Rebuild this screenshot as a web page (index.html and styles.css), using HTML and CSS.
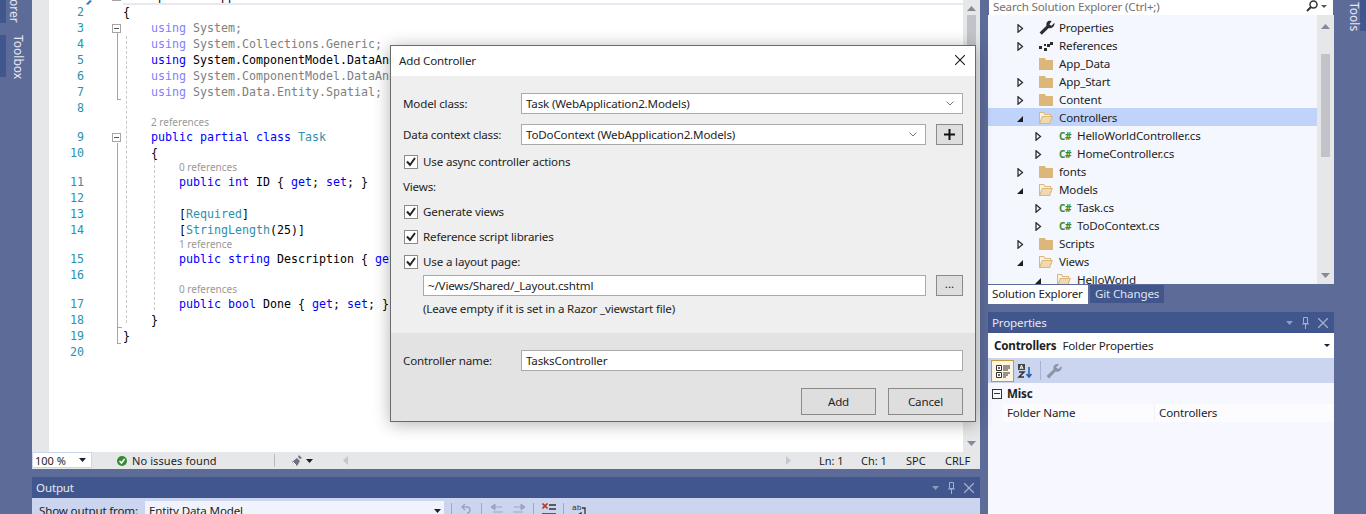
FILE: index.html
```html
<!DOCTYPE html>
<html lang="en">
<head>
<meta charset="utf-8">
<title>Add Controller</title>
<link rel="stylesheet" href="styles.css">
</head>
<body>
<div class="shell">
  <aside class="rail rail-left">
    <div class="rail-tab rail-tab-a"><span class="vtext">lorer</span></div>
    <div class="rail-tab rail-tab-b"><span class="vtext">Toolbox</span></div>
  </aside>

  <main class="center">
    <section class="editor">
      <div class="selmargin"></div>
      <div class="code">
        <div class="row first"><span class="ln"></span><span class="fold"><i class="fbox"></i></span><span class="src">namespace WebApplication2.Models</span></div>
        <div class="row"><span class="ln">2</span><span class="fold"></span><span class="src">{</span></div>
        <div class="row"><span class="ln">3</span><span class="fold"><i class="fbox"></i></span><span class="src">    <b class="kf">using</b> <b class="nf">System;</b></span></div>
        <div class="row"><span class="ln">4</span><span class="fold"></span><span class="src">    <b class="kf">using</b> <b class="nf">System.Collections.Generic;</b></span></div>
        <div class="row"><span class="ln">5</span><span class="fold"></span><span class="src">    <b class="k">using</b> System.ComponentModel.DataAnnotations;</span></div>
        <div class="row"><span class="ln">6</span><span class="fold"></span><span class="src">    <b class="kf">using</b> <b class="nf">System.ComponentModel.DataAnnotations.Schema;</b></span></div>
        <div class="row"><span class="ln">7</span><span class="fold"></span><span class="src">    <b class="kf">using</b> <b class="nf">System.Data.Entity.Spatial;</b></span></div>
        <div class="row"><span class="ln">8</span><span class="fold"></span><span class="src"></span></div>
        <div class="lens l1">2 references</div>
        <div class="row"><span class="ln">9</span><span class="fold"><i class="fbox"></i></span><span class="src">    <b class="k">public partial class</b> <b class="t">Task</b></span></div>
        <div class="row"><span class="ln">10</span><span class="fold"></span><span class="src">    {</span></div>
        <div class="lens l2">0 references</div>
        <div class="row"><span class="ln">11</span><span class="fold"></span><span class="src">        <b class="k">public int</b> ID { <b class="k">get</b>; <b class="k">set</b>; }</span></div>
        <div class="row"><span class="ln">12</span><span class="fold"></span><span class="src"></span></div>
        <div class="row"><span class="ln">13</span><span class="fold"></span><span class="src">        [<b class="t">Required</b>]</span></div>
        <div class="row"><span class="ln">14</span><span class="fold"></span><span class="src">        [<b class="t">StringLength</b>(25)]</span></div>
        <div class="lens l2">1 reference</div>
        <div class="row"><span class="ln">15</span><span class="fold"></span><span class="src">        <b class="k">public string</b> Description { <b class="k">get</b>; <b class="k">set</b>; }</span></div>
        <div class="row"><span class="ln">16</span><span class="fold"></span><span class="src"></span></div>
        <div class="lens l2">0 references</div>
        <div class="row"><span class="ln">17</span><span class="fold"></span><span class="src">        <b class="k">public bool</b> Done { <b class="k">get</b>; <b class="k">set</b>; }</span></div>
        <div class="row"><span class="ln">18</span><span class="fold"></span><span class="src">    }</span></div>
        <div class="row"><span class="ln">19</span><span class="fold"></span><span class="src">}</span></div>
        <div class="row"><span class="ln">20</span><span class="fold"></span><span class="src"></span></div>
        <i class="curline"></i>
        <i class="guide g1"></i><i class="guide g2"></i>
        <i class="fline f1"></i><i class="fline f2"></i>
        <svg class="pencil" width="8" height="5" viewBox="0 0 8 5"><path d="M0 4l4-4 2 1-4 4z" fill="#3a7bc8"/></svg>
      </div>
      <div class="vscroll">
        <svg width="9" height="5" viewBox="0 0 9 5"><path d="M0 5h9L4.500 0z" fill="#868999"/></svg>
        <i class="thumb"></i>
        <svg width="9" height="5" viewBox="0 0 9 5"><path d="M0 0h9L4.500 5z" fill="#868999"/></svg>
      </div>
    </section>

    <footer class="status">
      <div class="zoombox"><span>100 %</span><svg width="7" height="4" viewBox="0 0 7 4"><path d="M0 0h7L3.500 4z" fill="#1e1e3c"/></svg></div>
      <div class="issues">
        <svg width="14" height="14" viewBox="0 0 14 14"><circle cx="7" cy="7" r="5" fill="#388a34"/><path d="M4.500 7l2 2 3-4" fill="none" stroke="#fff" stroke-width="1.500"/></svg>
        <span>No issues found</span>
      </div>
      <i class="sep"></i>
      <svg class="brush" width="13" height="14" viewBox="0 0 13 14"><path d="M9 1l3 3-2 1-2-2zM7 4l3 3-3 5-5-4z" fill="#6f7180"/><path d="M3 8l3 3" stroke="#fff"/></svg>
      <svg class="caret" width="7" height="4" viewBox="0 0 7 4"><path d="M0 0h7L3.500 4z" fill="#1e1e1e"/></svg>
      <svg class="harrow" width="5" height="9" viewBox="0 0 5 9"><path d="M5 0v9L0 4.500z" fill="#c6c6ce"/></svg>
      <span class="grow"></span>
      <svg class="harrow-r" width="5" height="9" viewBox="0 0 5 9"><path d="M0 0v9l5-4.500z" fill="#c6c6ce"/></svg>
      <span class="pos p1">Ln: 1</span><span class="pos p2">Ch: 1</span><span class="pos p3">SPC</span><span class="pos p4">CRLF</span>
    </footer>

    <section class="output">
      <header class="panelhead">
        <span>Output</span>
        <span class="panelicons">
          <svg width="7" height="4" viewBox="0 0 7 4"><path d="M0 0h7L3.500 4z" fill="#8e9ac0"/></svg>
          <svg width="7" height="12" viewBox="0 0 7 12"><path d="M1.500 .500h4v6h-4zM0 7h7M3.500 7v5" fill="none" stroke="#a5aecb"/></svg>
          <svg width="10" height="10" viewBox="0 0 10 10"><path d="M0 0l10 10M10 0L0 10" stroke="#a5aecb" stroke-width="1.300"/></svg>
        </span>
      </header>
      <div class="outbar">
        <span class="outlabel">Show output from:</span>
        <div class="outselect"><span>Entity Data Model</span><svg width="7" height="4" viewBox="0 0 7 4"><path d="M0 0h7L3.500 4z" fill="#1e1e3c"/></svg></div>
        <i class="osep"></i>
        <svg class="oic" width="14" height="14" viewBox="0 0 14 14"><path d="M5 1L2 4l3 3M2 4h5c2 0 3 1 3 3s-1 3-3 3M7 12h7" fill="none" stroke="#9aa3bf" stroke-width="1.300"/></svg>
        <i class="osep"></i>
        <svg class="oic" width="14" height="14" viewBox="0 0 14 14"><path d="M5 1L1 4l4 3zM4 4h8M3 9h10M3 12h10" fill="#9aa3bf" stroke="#9aa3bf"/></svg>
        <svg class="oic" width="14" height="14" viewBox="0 0 14 14"><path d="M9 1l4 3-4 3zM2 4h8M1 9h10M1 12h10" fill="#9aa3bf" stroke="#9aa3bf"/></svg>
        <i class="osep"></i>
        <svg class="oic" width="14" height="14" viewBox="0 0 14 14"><path d="M7 2h7M7 6h7M0 11h14" stroke="#333" stroke-width="1.500"/><path d="M.500 .500l5 5M5.500 .500l-5 5" stroke="#c0391b" stroke-width="1.700"/></svg>
        <i class="osep"></i>
        <svg class="oic" width="14" height="14" viewBox="0 0 14 14"><text x="0" y="7" font-family="Liberation Mono, monospace" font-size="8" fill="#333">ab</text><path d="M10 5h3v7H7M9 10l-3 2 3 2z" fill="none" stroke="#333" stroke-width="1.300"/></svg>
      </div>
    </section>
  </main>

  <aside class="side">
    <section class="solution">
      <div class="search"><span>Search Solution Explorer (Ctrl+;)</span>
        <svg width="14" height="13" viewBox="0 0 14 13"><circle cx="8.500" cy="4.500" r="3.500" fill="none" stroke="#333" stroke-width="1.500"/><path d="M6 7l-4 4" stroke="#333" stroke-width="2"/></svg>
        <svg width="6" height="3" viewBox="0 0 6 3"><path d="M0 0h6L3 3z" fill="#555"/></svg>
      </div>
      <div class="treewrap">
        <ul class="tree">
          <li class="node"><svg class="exp"><use href="#tc"/></svg><svg class="ico wrench" viewBox="0 0 14 14"><path d="M13.500 2.500L11 5 9 4l2-3C8 0 6 2 6.500 5L.5 11l2 2 6-6c3 .8 5.500-1.500 5-4.500z" fill="#2d2d30"/></svg><span>Properties</span></li>
          <li class="node"><svg class="exp"><use href="#tc"/></svg><svg class="ico" viewBox="0 0 14 12"><path d="M0 6h3v3H0zM5 8h3v3H5zM8 4h3v3H8zM11 2h3v3h-3zM5 4h2v2H5z" fill="#2d2d30"/></svg><span>References</span></li>
          <li class="node"><i class="exp"></i><svg class="ico"><use href="#folder"/></svg><span>App_Data</span></li>
          <li class="node"><svg class="exp"><use href="#tc"/></svg><svg class="ico"><use href="#folder"/></svg><span>App_Start</span></li>
          <li class="node"><svg class="exp"><use href="#tc"/></svg><svg class="ico"><use href="#folder"/></svg><span>Content</span></li>
          <li class="node sel"><svg class="exp"><use href="#to"/></svg><svg class="ico"><use href="#folderopen"/></svg><span>Controllers</span></li>
          <li class="node d2"><svg class="exp"><use href="#tc"/></svg><em class="cs">C#</em><span>HelloWorldController.cs</span></li>
          <li class="node d2"><svg class="exp"><use href="#tc"/></svg><em class="cs">C#</em><span>HomeController.cs</span></li>
          <li class="node"><svg class="exp"><use href="#tc"/></svg><svg class="ico"><use href="#folder"/></svg><span>fonts</span></li>
          <li class="node"><svg class="exp"><use href="#to"/></svg><svg class="ico"><use href="#folderopen"/></svg><span>Models</span></li>
          <li class="node d2"><svg class="exp"><use href="#tc"/></svg><em class="cs">C#</em><span>Task.cs</span></li>
          <li class="node d2"><svg class="exp"><use href="#tc"/></svg><em class="cs">C#</em><span>ToDoContext.cs</span></li>
          <li class="node"><svg class="exp"><use href="#tc"/></svg><svg class="ico"><use href="#folder"/></svg><span>Scripts</span></li>
          <li class="node"><svg class="exp"><use href="#to"/></svg><svg class="ico"><use href="#folderopen"/></svg><span>Views</span></li>
          <li class="node d2"><svg class="exp"><use href="#to"/></svg><svg class="ico"><use href="#folderopen"/></svg><span>HelloWorld</span></li>
        </ul>
        <div class="vscroll small">
          <svg width="9" height="5" viewBox="0 0 9 5"><path d="M0 5h9L4.500 0z" fill="#868999"/></svg>
          <i class="thumb"></i>
          <svg width="9" height="5" viewBox="0 0 9 5"><path d="M0 0h9L4.500 5z" fill="#868999"/></svg>
        </div>
      </div>
      <nav class="tabs"><span class="tab on">Solution Explorer</span><span class="tab">Git Changes</span></nav>
    </section>

    <section class="props">
      <header class="panelhead">
        <span>Properties</span>
        <span class="panelicons">
          <svg width="7" height="4" viewBox="0 0 7 4"><path d="M0 0h7L3.500 4z" fill="#8e9ac0"/></svg>
          <svg width="7" height="12" viewBox="0 0 7 12"><path d="M1.500 .500h4v6h-4zM0 7h7M3.500 7v5" fill="none" stroke="#a5aecb"/></svg>
          <svg width="10" height="10" viewBox="0 0 10 10"><path d="M0 0l10 10M10 0L0 10" stroke="#a5aecb" stroke-width="1.300"/></svg>
        </span>
      </header>
      <div class="propsel"><strong>Controllers</strong><span>Folder Properties</span><svg width="6" height="3" viewBox="0 0 6 3"><path d="M0 0h6L3 3z" fill="#1e1e3c"/></svg></div>
      <div class="proptool">
        <span class="tbtn on"><svg width="16" height="16" viewBox="0 0 16 16"><path d="M1.500 2.500h5v5h-5zM1.500 9.500h5v5h-5z" fill="#fff" stroke="#333"/><path d="M3 5h2M3 12h2M4 4v2M4 11v2M8 3h7M8 5h7M8 7h5M8 10h7M8 12h5M8 14h3" stroke="#333"/></svg></span>
        <span class="tbtn"><svg width="16" height="16" viewBox="0 0 16 16"><path d="M1 1h7v6H1z" fill="#444"/><path d="M3 6l1.500-4L6 6M3.500 5h2" stroke="#fff" fill="none"/><path d="M2 9h5L2 14h5" fill="none" stroke="#333" stroke-width="1.500"/><path d="M12 4v10M9.500 11l2.500 3 2.500-3" fill="none" stroke="#1c5fb0" stroke-width="1.500"/></svg></span>
        <i class="tsep"></i>
        <span class="tbtn"><svg width="16" height="16" viewBox="0 0 16 16"><path d="M15.500 3L12.500 6 10 4.500 13 1.500C9.500 0 6.500 3 7.500 6.500L.5 13l2.500 2.500 6.500-7c3.500 1 7-2 6-5.500z" fill="#8f93a3"/></svg></span>
      </div>
      <div class="propgrid">
        <div class="propcat"><i class="minus"></i><strong>Misc</strong></div>
        <div class="propitem"><span class="pname">Folder Name</span><span class="pval">Controllers</span></div>
      </div>
    </section>
  </aside>

  <aside class="rail rail-right">
    <div class="rail-tab-r"><span class="vtext">Tools</span></div>
  </aside>
</div>

<div class="dialog" role="dialog">
  <header class="dlg-title">
    <span>Add Controller</span>
    <svg width="10" height="10" viewBox="0 0 10 10"><path d="M0 0l10 10M10 0L0 10" stroke="#1a1a1a" stroke-width="1.100"/></svg>
  </header>
  <div class="dlg-body">
    <div class="field f-model"><label>Model class:</label><div class="select"><span>Task (WebApplication2.Models)</span><svg class="chev" width="8" height="5" viewBox="0 0 8 5"><path d="M.500 .500L4 4 7.500 .500" fill="none" stroke="#777"/></svg></div></div>
    <div class="field f-ctx"><label>Data context class:</label><div class="select"><span>ToDoContext (WebApplication2.Models)</span><svg class="chev" width="8" height="5" viewBox="0 0 8 5"><path d="M.500 .500L4 4 7.500 .500" fill="none" stroke="#777"/></svg></div><button class="sq"><svg width="11" height="11" viewBox="0 0 11 11"><path d="M5.500 0v11M0 5.500h11" stroke="#111" stroke-width="2"/></svg></button></div>
    <div class="check c-async"><i class="box"><svg width="14" height="13" viewBox="0 0 14 13"><path d="M3 6.500l3 3.500 5-7" fill="none" stroke="#222" stroke-width="2"/></svg></i><span>Use async controller actions</span></div>
    <div class="viewslabel">Views:</div>
    <div class="check c-gen"><i class="box"><svg width="14" height="13" viewBox="0 0 14 13"><path d="M3 6.500l3 3.500 5-7" fill="none" stroke="#222" stroke-width="2"/></svg></i><span>Generate views</span></div>
    <div class="check c-ref"><i class="box"><svg width="14" height="13" viewBox="0 0 14 13"><path d="M3 6.500l3 3.500 5-7" fill="none" stroke="#222" stroke-width="2"/></svg></i><span>Reference script libraries</span></div>
    <div class="check c-lay"><i class="box"><svg width="14" height="13" viewBox="0 0 14 13"><path d="M3 6.500l3 3.500 5-7" fill="none" stroke="#222" stroke-width="2"/></svg></i><span>Use a layout page:</span></div>
    <div class="layoutrow"><div class="select input"><span>~/Views/Shared/_Layout.cshtml</span></div><button class="sq dots">...</button></div>
    <div class="hint">(Leave empty if it is set in a Razor _viewstart file)</div>
  </div>
  <div class="dlg-foot">
    <div class="field f-name"><label>Controller name:</label><div class="select input"><span>TasksController</span></div></div>
    <div class="actions"><button class="btn">Add</button><button class="btn">Cancel</button></div>
  </div>
</div>

<svg class="defs" width="0" height="0">
  <symbol id="tc" viewBox="0 0 7 9"><path d="M1 .8L5.500 4.500 1 8.200z" fill="none" stroke="#2d2d30" stroke-width="1.300"/></symbol>
  <symbol id="to" viewBox="0 0 7 9"><path d="M6 2v6H0z" fill="#1e1e1e"/></symbol>
  <symbol id="folder" viewBox="0 0 14 12"><path d="M0 0h6l1 2h7v10H0z" fill="#dcb67a"/></symbol>
  <symbol id="folderopen" viewBox="0 0 14 12"><path d="M0 0h5l1 2h6v2h2l-3 8H0z" fill="#dcb67a"/><path d="M1 1h3.500l1 2H11v1H3L1 9z" fill="#f8f3e6"/><path d="M3.600 5h8.900l-2.200 6H1.500z" fill="#efd9b0"/></symbol>
</svg>
</body>
</html>
```
FILE: styles.css
```css
* { box-sizing: border-box; }
html, body { margin: 0; height: 100%; overflow: hidden; }
body {
  background: #5d6b99;
  font-family: "Noto Sans", "Liberation Sans", sans-serif;
  font-size: 11.6px;
  letter-spacing: -.17px;
  color: #1e1e1e;
}
i, em { font-style: normal; }
b { font-weight: normal; }
svg { display: block; flex: none; }
.defs { position: absolute; }

.shell { display: flex; height: 514px; overflow: hidden; }

/* rails */
.rail { width: 32px; flex: none; color: #e6e8f2; }
.rail-tab { width: 6px; background: #40568d; }
.rail-tab-a { height: 23px; margin-bottom: 12px; display: flex; align-items: flex-end; }
.rail-tab-b { height: 42px; }
.vtext { display: block; width: 24px; writing-mode: vertical-rl; padding-left: 8px; white-space: nowrap; line-height: 12px; font-size: 12px; letter-spacing: 0; }
.rail-tab-r { height: 31px; border-right: 6px solid #40568d; padding-left: 3px; display: flex; align-items: flex-end; }

/* center */
.center { width: 948px; flex: none; display: flex; flex-direction: column; }
.editor { height: 452px; flex: none; display: flex; background: #fff; overflow: hidden; }
.selmargin { width: 17px; flex: none; background: #e6e7e8; }
.code {
  flex: 1; position: relative; overflow: hidden;
  font-family: "DejaVu Sans Mono", "Liberation Mono", monospace;
  font-size: 11.63px; letter-spacing: 0; color: #000;
}
.row { display: flex; height: 16px; line-height: 16px; white-space: pre; }
.row.first { margin-top: -12px; }
.ln { width: 35px; text-align: right; color: #2b91af; flex: none; }
.fold { width: 39px; flex: none; position: relative; }
.fbox { position: absolute; left: 28px; top: 4px; width: 9px; height: 9px; border: 1px solid #a5a5a5; background: #fff; }
.fbox::after { content: ""; position: absolute; left: 1px; top: 3px; width: 5px; height: 1px; background: #555; }
.src { white-space: pre; }
.k { color: #0000ff; }
.kf { color: #8080ff; }
.nf { color: #808080; }
.t { color: #2b91af; }
.lens { height: 13px; line-height: 13px; font-family: "Noto Sans", sans-serif; font-size: 10px; letter-spacing: 0; color: #999; }
.lens.l1 { padding-left: 102px; }
.lens.l2 { padding-left: 130px; }
.curline { position: absolute; left: 74px; right: 0; top: 3px; height: 2px; background: #e9e8f2; }
.guide { position: absolute; width: 0; border-left: 1px dashed #c8c8c8; }
.g1 { left: 77px; top: 36px; height: 287px; }
.g2 { left: 105px; top: 160px; height: 150px; }
.fline { position: absolute; left: 68px; width: 4px; border-left: 1px solid #a5a5a5; border-bottom: 1px solid #a5a5a5; }
.f1 { top: 33px; height: 67px; }
.f2 { top: 143px; height: 201px; }
.f2::before { content: ""; position: absolute; left: 0; top: 184px; width: 4px; height: 1px; background: #a5a5a5; }
.pencil { position: absolute; left: 37px; top: 0; }

.vscroll { width: 17px; flex: none; background: #e6e7e8; display: flex; flex-direction: column; align-items: center; }
.vscroll > svg { margin-top: 6px; margin-bottom: 4px; }
.vscroll .thumb { width: 9px; height: 30px; flex: 0 0 30px; background: #c2c3c9; margin-bottom: auto; }
.vscroll .thumb + svg { margin: 0 0 6px; }

/* status */
.status { height: 17px; flex: none; display: flex; align-items: center; background: #e6e7e8; letter-spacing: 0; font-size: 11px; }
.zoombox { width: 60px; height: 16px; margin-top: -1px; flex: none; background: #fff; border: 1px solid #ccd5f0; display: flex; align-items: center; justify-content: space-between; padding: 0 5px 0 2px; }
.issues { display: flex; align-items: center; gap: 3px; margin-left: 23px; white-space: nowrap; width: 101px; letter-spacing: .1px; }
.sep { width: 1px; height: 13px; background: #b8b9c2; margin-left: 58px; }
.brush { margin-left: 15px; }
.caret { margin-left: 3px; }
.harrow { margin-left: 30px; }
.harrow-r { margin-right: 28px; }
.grow { flex: 1; }
.pos { white-space: nowrap; }
.p1 { width: 42px; }
.p2 { width: 45px; }
.p3 { width: 39px; }
.p4 { width: 35px; }

/* panels */
.panelhead { height: 21px; flex: none; background: #40568d; color: #e6e8f2; display: flex; align-items: center; justify-content: space-between; padding: 0 6px 0 4px; }
.panelicons { display: flex; align-items: center; gap: 9px; }

.output { margin-top: 8px; flex: 1; display: flex; flex-direction: column; background: #ccd5f0; min-height: 0; overflow: hidden; }
.outbar { flex: none; height: 25px; display: flex; align-items: flex-start; padding: 3px 0 0 7px; }
.outlabel { width: 106px; flex: none; line-height: 19px; }
.outselect { width: 299px; height: 19px; flex: none; background: #f0f3fb; display: flex; align-items: center; justify-content: space-between; padding: 0 3px 0 4px; }
.oic { margin-left: 8px; margin-top: 2px; }
.osep { width: 1px; height: 14px; background: #9aa9d4; margin-left: 7px; margin-top: 2px; }

/* right side */
.side { width: 346px; flex: none; margin-left: 8px; display: flex; flex-direction: column; }
.solution { height: 304px; flex: none; display: flex; flex-direction: column; }
.search { height: 15px; flex: none; margin: 0 1px; background: #fff; display: flex; align-items: center; padding: 0 6px 2px 4px; gap: 2px; color: #717171; }
.search span { flex: 1; }
.treewrap { flex: none; height: 269px; display: flex; background: #f5f7ff; }
.tree { list-style: none; margin: 3px 0 0; padding: 0; flex: 1; overflow: hidden; height: 266px; }
.node { height: 18px; display: flex; align-items: center; line-height: 16px; padding: 2px 0 0 29px; white-space: nowrap; }
.node.d2 { padding-left: 47px; }
.node.sel { background: #c0d3fb; }
.exp { width: 7px; height: 9px; flex: none; margin-right: 15px; display: block; }
.d2 .exp { margin-right: 17px; }
.ico { width: 14px; height: 12px; flex: none; margin-right: 6px; }
.ico.wrench { width: 16px; height: 16px; margin-right: 4px; }
.d2 .ico { margin-left: -2px; }
.cs { width: 16px; flex: none; margin-right: 2px; color: #388a34; font-weight: 700; font-size: 10px; letter-spacing: -.5px; }
.vscroll.small .thumb { height: 103px; flex: 0 0 103px; }
.vscroll.small > svg:first-child { margin-top: 9px; margin-bottom: 25px; }
.vscroll.small .thumb + svg { margin-bottom: 6px; }

.tabs { flex: none; height: 20px; display: flex; gap: 2px; margin-top: 1px; }
.tab { height: 18px; width: 74px; padding: 0 5px; line-height: 17px; background: #40568d; color: #dfe3f0; white-space: nowrap; }
.tab.on { height: 19px; width: 100px; padding: 0 4px; background: #fff; color: #1e1e1e; }

.props { margin-top: 8px; flex: 1; display: flex; flex-direction: column; background: #f6f7ff; min-height: 0; }
.propsel { height: 25px; flex: none; background: #fff; display: flex; align-items: center; padding: 0 4px 0 6px; gap: 6px; }
.propsel span { flex: 1; }
.propsel strong { font-weight: 700; }
.proptool { height: 25px; flex: none; background: #ccd5f0; display: flex; align-items: center; padding-left: 3px; }
.tbtn { width: 18px; height: 22px; display: flex; align-items: center; justify-content: center; }
.tbtn.on { width: 23px; background: #fdf4e2; border: 1px solid #c49a3c; margin-right: 2px; }
.tsep { width: 1px; height: 19px; background: #a8b2cf; margin: 0 4px 0 6px; }
.propcat { height: 21px; display: flex; align-items: center; padding-left: 4px; gap: 5px; }
.propcat strong { font-weight: 700; }
.minus { width: 10px; height: 10px; border: 1px solid #333; position: relative; }
.minus::after { content: ""; position: absolute; left: 1px; top: 3px; width: 6px; height: 1px; background: #333; }
.propitem { height: 18px; margin-left: 15px; display: flex; background: #fcfcff; align-items: center; line-height: 16px; padding-bottom: 1px; }
.pname { width: 152px; padding-left: 4px; }
.pval { padding-left: 4px; box-shadow: -1px 0 0 #f0f0f5; }

/* dialog */
.dialog {
  position: absolute; left: 390px; top: 45px; width: 586px; height: 377px;
  background: #efefef; border: 1px solid #6a6a6a;
  box-shadow: 0 2px 16px rgba(0,0,0,.3);
  display: flex; flex-direction: column;
}
.dlg-title { height: 30px; flex: none; background: #fff; display: flex; align-items: center; justify-content: space-between; padding: 0 10px 2px 8px; }
.dlg-body { height: 257px; flex: none; padding: 17px 12px 0; display: flex; flex-direction: column; }
.field { display: flex; align-items: center; }
.field label { width: 118px; flex: none; }
.select { flex: 1; height: 21px; background: #fff; border: 1px solid #aaa; display: flex; align-items: center; justify-content: space-between; padding: 0 7px 0 4px; min-width: 0; }
.chev { margin-right: 1px; }
.sq { width: 27px; height: 21px; flex: none; margin-left: 10px; padding: 0; background: #dedede; border: 1px solid #8a8a8a; display: flex; align-items: center; justify-content: center; font: inherit; color: inherit; }
.f-ctx { margin-top: 10px; }
.check { display: flex; align-items: center; height: 16px; gap: 5px; }
.check span { padding-bottom: 2px; }
.box { width: 14px; height: 14px; flex: none; background: #fff; border: 1px solid #8a8a8a; display: block; margin-left: 1px; }
.box svg { margin: -1px 0 0 -1px; }
.c-async { margin-top: 9px; }
.viewslabel { height: 16px; line-height: 16px; margin-top: 9px; }
.c-gen, .c-ref, .c-lay { margin-top: 9px; }
.layoutrow { display: flex; margin-top: 5px; margin-left: 20px; }
.hint { margin-left: 20px; margin-top: 5px; height: 16px; line-height: 16px; }
.dlg-foot { flex: 1; background: #e3e3e3; padding: 17px 12px 0; display: flex; flex-direction: column; }
.actions { display: flex; justify-content: flex-end; gap: 12px; margin-top: 17px; }
.btn { width: 75px; height: 27px; background: #dedede; border: 1px solid #8a8a8a; font: inherit; color: #1e1e1e; padding: 0; letter-spacing: inherit; }
.dots { padding-bottom: 4px; }
```
